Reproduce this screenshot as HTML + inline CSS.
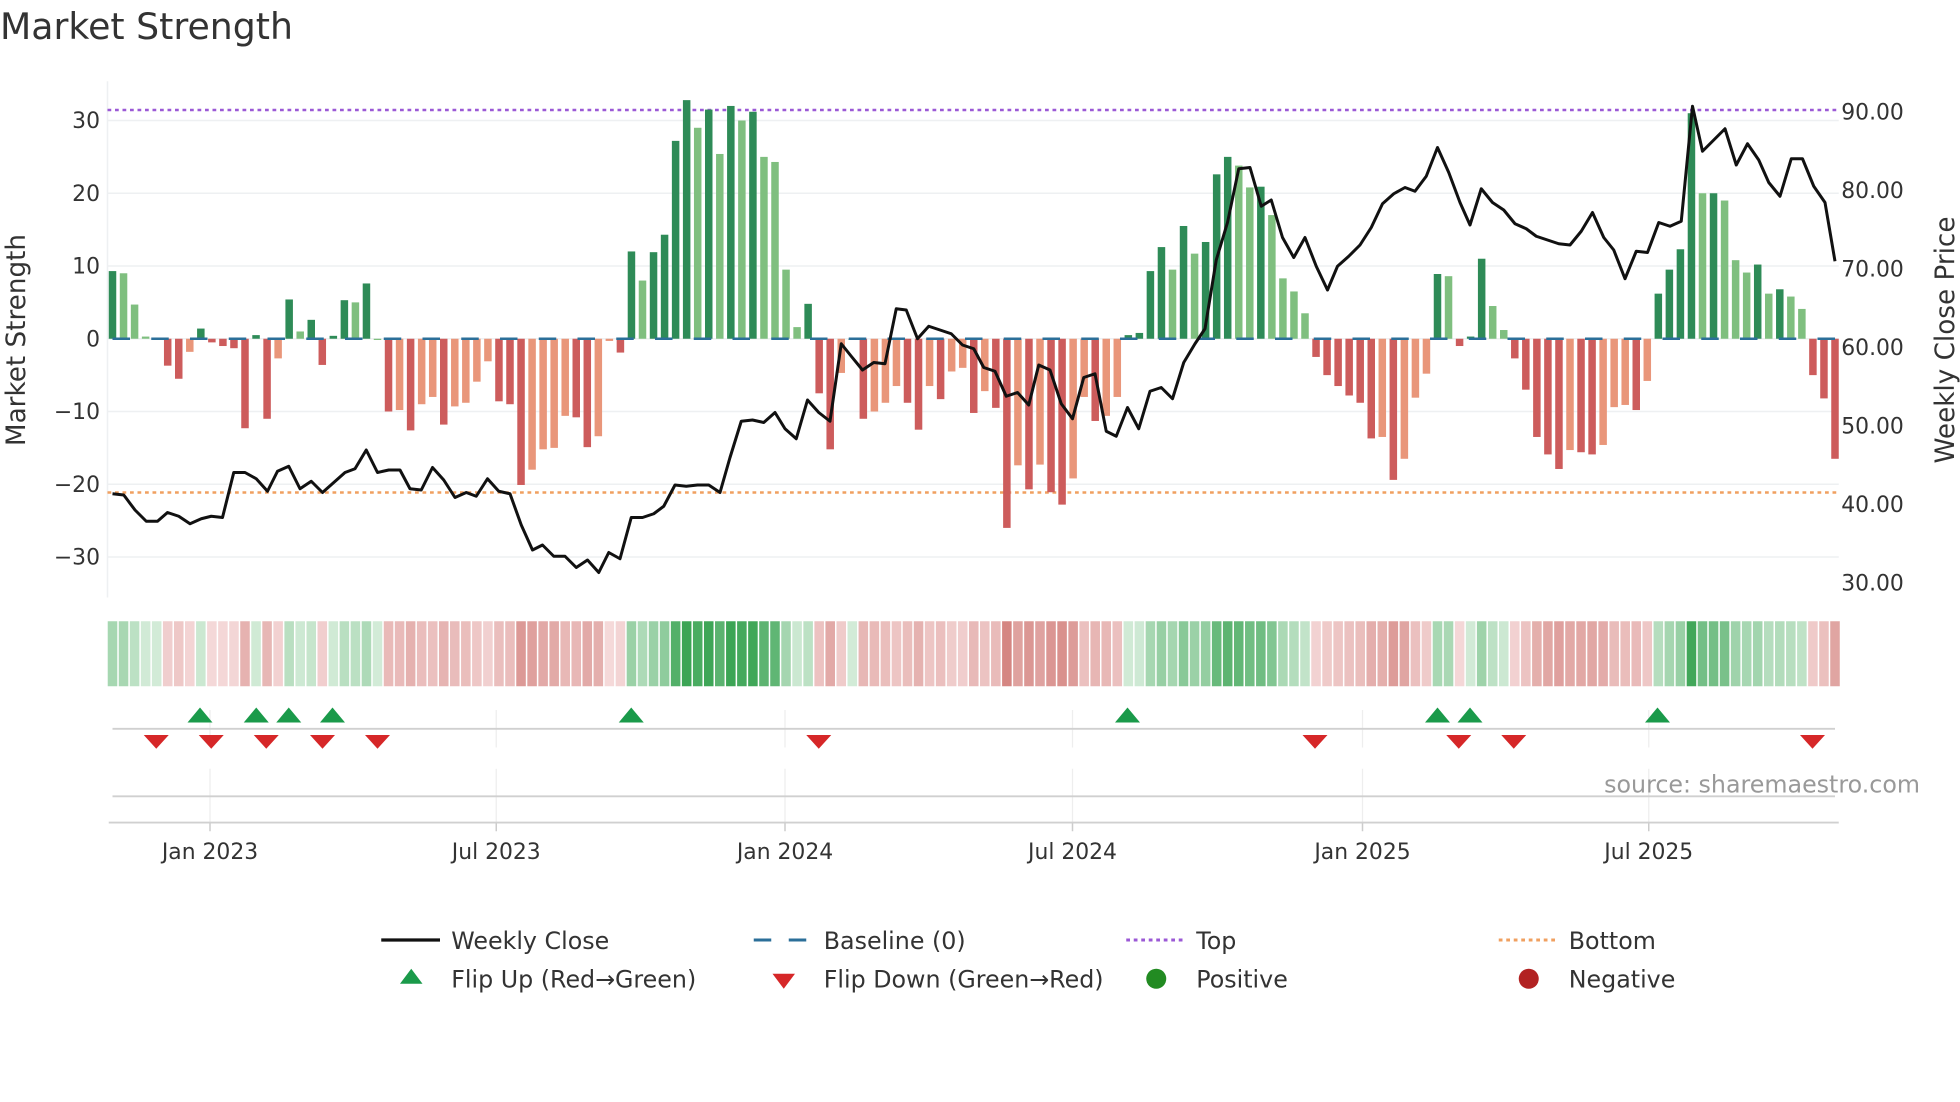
<!DOCTYPE html>
<html><head><meta charset="utf-8"><style>
html,body{margin:0;padding:0;background:#fff;}
svg{display:block;font-family:"DejaVu Sans","Liberation Sans",sans-serif;}
</style></head><body>
<svg id="s" width="1960" height="1102" viewBox="0 0 1568 881.6" xmlns="http://www.w3.org/2000/svg">
<rect width="1568" height="882" fill="#fff"/>
<text x="0" y="31" font-size="29" fill="#333">Market Strength</text>
<g id="grid"></g>
<g id="bars"></g>
<g id="heat"></g>
<g id="flips"></g>
<g id="txt" fill="#333" font-size="17.5"></g>
<polyline id="price" fill="none" stroke="#111" stroke-width="2.4" stroke-linejoin="round"/>
<text x="1536" y="634" font-size="19" fill="#999" text-anchor="end">source: sharemaestro.com</text>
<text transform="translate(20,272) rotate(-90)" font-size="21" fill="#333" text-anchor="middle">Market Strength</text>
<text transform="translate(1563,272) rotate(-90)" font-size="21" fill="#333" text-anchor="middle">Weekly Close Price</text>
<g font-size="19" fill="#333">
<line x1="305" y1="752" x2="352" y2="752" stroke="#111" stroke-width="2.6"/>
<text x="361" y="759">Weekly Close</text>
<line x1="603" y1="752" x2="617" y2="752" stroke="#2b6f99" stroke-width="2.4"/>
<line x1="631" y1="752" x2="645" y2="752" stroke="#2b6f99" stroke-width="2.4"/>
<text x="659" y="759">Baseline (0)</text>
<line x1="901" y1="752" x2="946" y2="752" stroke="#9b59d6" stroke-width="2.4" stroke-dasharray="3,3"/>
<text x="957" y="759">Top</text>
<line x1="1199" y1="752" x2="1244" y2="752" stroke="#f0a060" stroke-width="2.4" stroke-dasharray="3,3"/>
<text x="1255" y="759">Bottom</text>
<polygon points="320,787 338,787 329,775" fill="#1a9a4a"/>
<text x="361" y="790">Flip Up (Red→Green)</text>
<polygon points="618,779 636,779 627,791" fill="#d62728"/>
<text x="659" y="790">Flip Down (Green→Red)</text>
<circle cx="925" cy="783" r="8" fill="#228b22"/>
<text x="957" y="790">Positive</text>
<circle cx="1223" cy="783" r="8" fill="#b22222"/>
<text x="1255" y="790">Negative</text>
</g>
</svg>
<script>
var NS="http://www.w3.org/2000/svg";
function el(p,t,a){var e=document.createElementNS(NS,t);for(var k in a)e.setAttribute(k,a[k]);p.appendChild(e);return e;}
var grid=document.getElementById('grid'),bars=document.getElementById('bars'),heat=document.getElementById('heat'),flips=document.getElementById('flips'),txt=document.getElementById('txt');
function ys(v){return 271-v*5.82;}
[30,20,10,0,-10,-20,-30].forEach(function(v){el(grid,'line',{x1:86,x2:1471,y1:ys(v),y2:ys(v),stroke:'#eef0f2','stroke-width':1.2});
 var t=el(txt,'text',{x:80,y:ys(v)+6,'text-anchor':'end'});t.textContent=(v<0?'\u2212':'')+Math.abs(v);});
[90,80,70,60,50,40,30].forEach(function(p){var y=278-(p-60)*6.28;var t=el(txt,'text',{x:1473,y:y+6});t.textContent=p.toFixed(2);});
el(grid,'line',{x1:86,x2:86,y1:65,y2:478,stroke:'#eef0f2','stroke-width':1.2});
el(grid,'line',{x1:86,x2:1471,y1:88,y2:88,stroke:'#9b59d6','stroke-width':2,'stroke-dasharray':'3,3'});
el(grid,'line',{x1:86,x2:1471,y1:394,y2:394,stroke:'#f0a060','stroke-width':2,'stroke-dasharray':'3,3'});
var vals=[9.3,9,4.7,0.3,0,-3.7,-5.5,-1.8,1.4,-0.5,-1,-1.3,-12.3,0.5,-11,-2.7,5.4,1,2.6,-3.6,0.4,5.3,5,7.6,0,-10,-9.8,-12.6,-9,-8,-11.8,-9.3,-8.8,-5.9,-3.1,-8.6,-9,-20.1,-18,-15.2,-15,-10.6,-10.8,-14.9,-13.4,-0.3,-1.9,12,8,11.9,14.3,27.2,32.8,29,31.5,25.4,32,30,31.2,25,24.3,9.5,1.6,4.8,
-7.5,-15.2,-4.7,0,-11,-10,-8.8,-6.5,-8.8,-12.5,-6.5,-8.3,-4.5,-4,-10.2,-7.2,-9.5,-26,-17.4,-20.7,-17.3,-21.1,-22.8,-19.2,-8,-11.3,-10.6,-8,0.5,0.8,9.3,12.6,9.5,15.5,11.7,13.3,22.6,25,23.8,20.8,20.9,17,8.3,6.5,3.5,-2.5,-5,-6.5,-7.8,-8.8,-13.7,-13.5,-19.4,-16.5,-8.1,-4.8,8.9,8.6,-1,0.3,11,4.5,1.2,-2.7,-7,-13.5,-15.9,-17.9,-15.3,-15.6,-15.9,-14.6,-9.4,-9.1,-9.8,-5.8,6.2,9.5,12.3,31,20,20,19,10.8,9.1,10.2,6.2,6.8,5.8,4.1,-5,-8.2,-16.5];
var n=vals.length,step=(1468-90)/(n-1);
for(var i=0;i<n;i++){var v=vals[i],pv=i?vals[i-1]:0,x=90+i*step,c;
 if(v>=0)c=(v>=pv)?'#2e8b57':'#7fbf7f';else c=(v<=pv)?'#cd5c5c':'#e9967a';
 var y0=ys(0),y1=ys(v);el(bars,'rect',{x:x-3,width:6,y:Math.min(y0,y1),height:Math.max(Math.abs(y1-y0),1),fill:c});
 var a=Math.min(Math.abs(v)/32,1),col;
 if(v>=0){var r=Math.round(210-(210-60)*a),g=Math.round(235-(235-165)*a),b=Math.round(215-(215-85)*a);col='rgb('+r+','+g+','+b+')';}
 else{var r=Math.round(245-(245-205)*a),g=Math.round(218-(218-115)*a),b=Math.round(218-(218-110)*a);col='rgb('+r+','+g+','+b+')';}
 el(heat,'rect',{x:x-step/2+0.6,width:step-1.2,y:497,height:52,fill:col});}
for(var x=90;x<1468;x+=31){el(bars,'line',{x1:x,x2:x+14,y1:ys(0),y2:ys(0),stroke:'#2b6f99','stroke-width':2});}
[168,397,628,858,1090,1319].forEach(function(x){el(flips,'line',{x1:x,x2:x,y1:568,y2:598,stroke:'#eee','stroke-width':1});el(flips,'line',{x1:x,x2:x,y1:615,y2:658,stroke:'#eee','stroke-width':1});
 el(flips,'line',{x1:x,x2:x,y1:658,y2:665,stroke:'#ccc','stroke-width':1.2});});
el(flips,'line',{x1:90,x2:1468,y1:583,y2:583,stroke:'#d0d0d0','stroke-width':1.5});
el(flips,'line',{x1:90,x2:1468,y1:637,y2:637,stroke:'#d0d0d0','stroke-width':1.5});
el(flips,'line',{x1:87,x2:1471,y1:658,y2:658,stroke:'#d0d0d0','stroke-width':1.5});
[160,205,231,266,505,902,1150,1176,1326].forEach(function(x){el(flips,'polygon',{points:(x-10)+',578 '+(x+10)+',578 '+x+',566',fill:'#1a9a4a'});});
[125,169,213,258,302,655,1052,1167,1211,1450].forEach(function(x){el(flips,'polygon',{points:(x-10)+',588 '+(x+10)+',588 '+x+',599',fill:'#d62728'});});
[['Jan 2023',168],['Jul 2023',397],['Jan 2024',628],['Jul 2024',858],['Jan 2025',1090],['Jul 2025',1319]].forEach(function(d){var t=el(txt,'text',{x:d[1],y:687,'text-anchor':'middle'});t.textContent=d[0];});
var pts=[[90,395],[99,396],[108,408],[117,417],[126,417],[134,410],[143,413],[152,419],[161,415],[169,413],[178,414],[187,378],[196,378],[205,383],[214,393],[222,377],[231,373],[240,391],[249,385],[258,394],[267,386],[276,378],[284,375],[293,360],[302,378],[311,376],[320,376],[328,391],[337,392],[346,374],[355,384],[364,398],[373,394],[381,397],[390,383],[399,393],[408,395],[417,420],[426,440],[434,436],[443,445],[452,445],[461,454],[470,448],[479,458],[487,442],[496,447],[505,414],[514,414],[523,411],[531,405],[540,388],[549,389],[558,388],[567,388],[576,394],[584,366],[593,337],[602,336],[611,338],[620,330],[628,343],[637,351],[646,320],[655,330],[664,337],[673,275],[681,285],[690,296],[699,290],[708,291],[717,247],[725,248],[734,271],[743,261],[752,264],[761,267],[770,276],[779,279],[787,294],[796,297],[805,317],[814,314],[823,324],[831,292],[840,296],[849,323],[858,335],[867,302],[876,299],[885,345],[893,349],[902,326],[911,343],[920,313],[929,310],[938,319],[947,290],[956,275],[964,263],[973,208],[982,178],[991,135],[1000,134],[1009,165],[1017,160],[1026,190],[1035,206],[1044,190],[1053,213],[1062,232],[1070,213],[1079,205],[1088,196],[1097,182],[1106,163],[1115,155],[1124,150],[1132,153],[1141,141],[1150,118],[1159,138],[1168,162],[1176,180],[1185,151],[1194,162],[1203,168],[1212,179],[1221,183],[1229,189],[1238,192],[1247,195],[1256,196],[1265,185],[1274,170],[1283,190],[1291,200],[1300,223],[1309,201],[1318,202],[1327,178],[1336,181],[1345,177],[1354,85],[1362,121],[1371,112],[1380,103],[1389,132],[1398,115],[1407,128],[1415,146],[1424,157],[1433,127],[1442,127],[1451,149],[1460,162],[1468,209]];
document.getElementById('price').setAttribute('points',pts.map(function(p){return p.join(',');}).join(' '));
</script>
</body></html>
